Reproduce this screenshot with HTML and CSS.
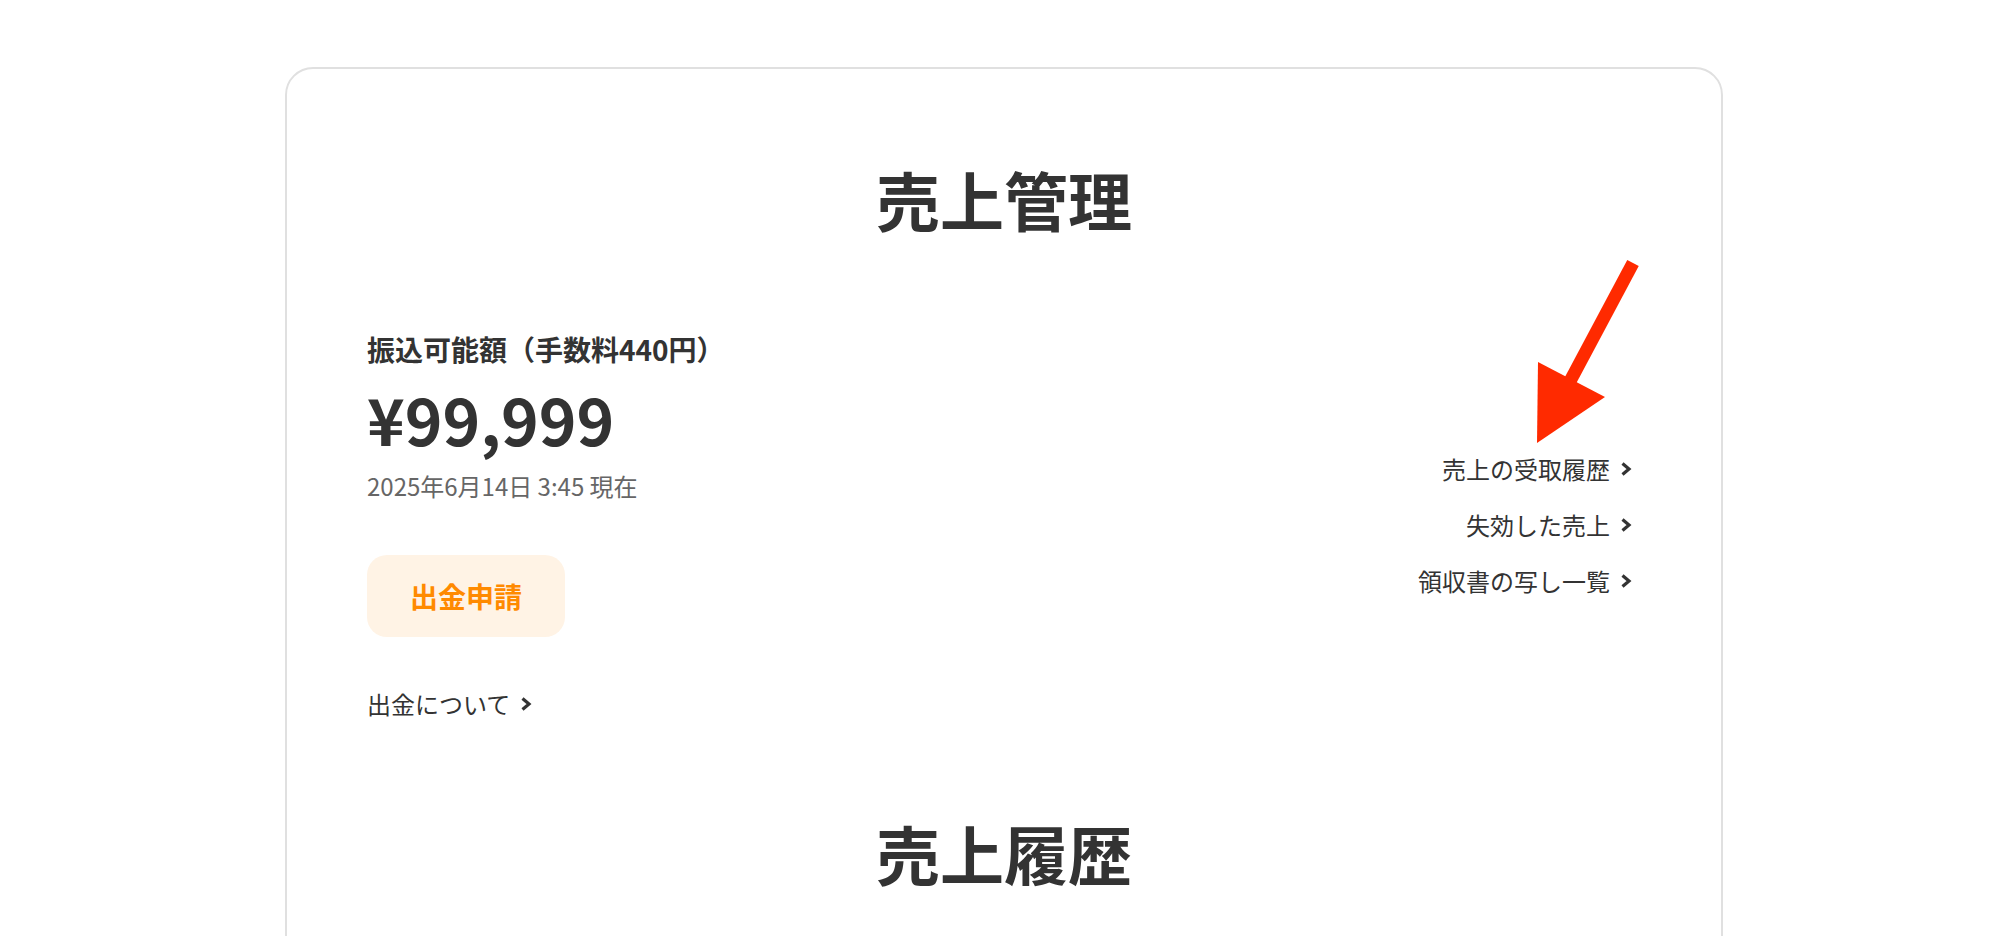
FILE: index.html
```html
<!DOCTYPE html>
<html lang="ja">
<head>
<meta charset="utf-8">
<title>売上管理</title>
<link rel="stylesheet" href="styles.css">
</head>
<body>
<div class="page">
  <main class="card">
    <h1 class="section-title">売上管理</h1>
    <section class="balance">
      <div class="balance-main">
        <p class="label">振込可能額（手数料440円）</p>
        <p class="amount">¥99,999</p>
        <p class="date">2025年6月14日 3:45 現在</p>
        <button class="withdraw" type="button">出金申請</button>
        <a class="link about" href="#">出金について<svg class="chev" viewBox="0 0 12 16" aria-hidden="true"><polyline points="2.5,2.5 9,8 2.5,13.5"/></svg></a>
      </div>
      <nav class="side-links">
        <a class="link" href="#">売上の受取履歴<svg class="chev" viewBox="0 0 12 16" aria-hidden="true"><polyline points="2.5,2.5 9,8 2.5,13.5"/></svg></a>
        <a class="link" href="#">失効した売上<svg class="chev" viewBox="0 0 12 16" aria-hidden="true"><polyline points="2.5,2.5 9,8 2.5,13.5"/></svg></a>
        <a class="link" href="#">領収書の写し一覧<svg class="chev" viewBox="0 0 12 16" aria-hidden="true"><polyline points="2.5,2.5 9,8 2.5,13.5"/></svg></a>
      </nav>
    </section>
    <h2 class="section-title history-title">売上履歴</h2>
  </main>
  <svg class="annotation-arrow" viewBox="1525 250 130 200" aria-hidden="true">
    <line x1="1633" y1="263" x2="1568" y2="385"/>
    <polygon points="1538,362 1605,397 1537,443"/>
  </svg>
</div>
</body>
</html>
```

FILE: styles.css
```css
html, body {
  margin: 0;
  padding: 0;
  background: #ffffff;
}

body {
  font-family: "Noto Sans CJK JP", "Noto Sans", sans-serif;
  color: #333333;
}

.page {
  position: relative;
  height: 936px;
  overflow: hidden;
}

.card {
  box-sizing: border-box;
  width: 1438px;
  margin: 67px 0 0 285px;
  border: 2px solid #e0e0e0;
  border-radius: 28px;
  padding: 81px 80px 400px;
}

.section-title {
  margin: 0;
  font-size: 64px;
  line-height: 1.5;
  font-weight: 700;
  text-align: center;
  color: #333333;
}

.history-title {
  margin-top: 82px;
}

.balance {
  margin-top: 82px;
  display: flex;
  justify-content: space-between;
  align-items: center;
}

.balance-main {
  display: flex;
  flex-direction: column;
  align-items: flex-start;
}

.label {
  margin: 0;
  font-size: 28px;
  line-height: 1.5;
  font-weight: 700;
}

.amount {
  margin: 0;
  font-size: 64px;
  line-height: 1.5;
  font-weight: 700;
}

.date {
  margin: 2px 0 0;
  font-size: 24px;
  line-height: 1.5;
  color: #666666;
}

.withdraw {
  margin-top: 51px;
  padding: 20px 43px;
  border: none;
  border-radius: 20px;
  background: #fff3e5;
  color: #ff8a00;
  font-family: "Noto Sans CJK JP", "Noto Sans", sans-serif;
  font-size: 28px;
  line-height: 1.5;
  font-weight: 700;
}

.about {
  margin-top: 49px;
}

.side-links {
  display: flex;
  flex-direction: column;
  align-items: flex-end;
  gap: 20px;
  padding-right: 9px;
}

.link {
  display: flex;
  align-items: center;
  font-size: 24px;
  line-height: 1.5;
  color: #333333;
  text-decoration: none;
}

.chev {
  width: 12px;
  height: 16px;
  margin-left: 10px;
  fill: none;
  stroke: #333333;
  stroke-width: 3.2;
}

.annotation-arrow {
  position: absolute;
  left: 1525px;
  top: 250px;
  width: 130px;
  height: 200px;
}

.annotation-arrow line {
  stroke: #ff2a00;
  stroke-width: 13;
}

.annotation-arrow polygon {
  fill: #ff2a00;
}
```
